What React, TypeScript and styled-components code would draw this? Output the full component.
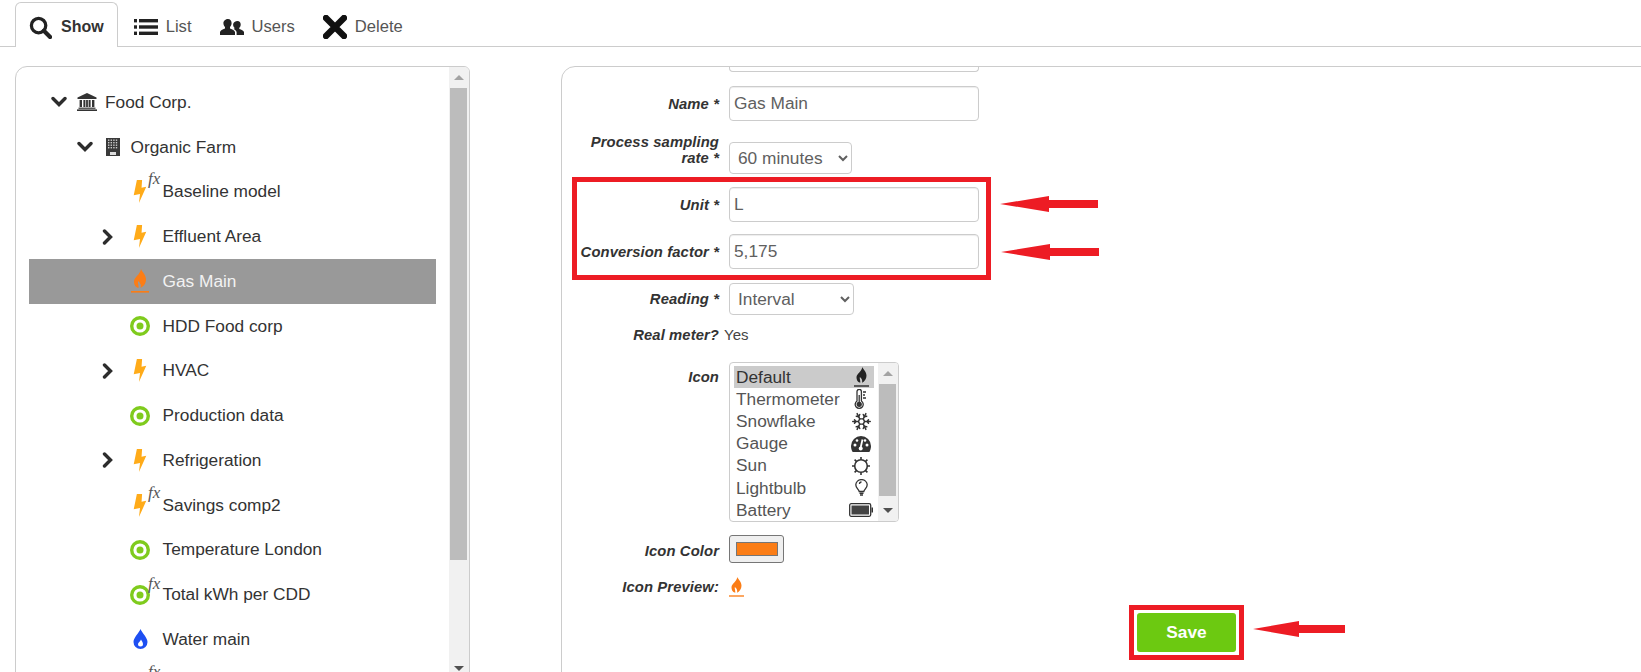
import React from "react";
import styled, { createGlobalStyle } from "styled-components";
import { Snowflake } from "lucide-react";

const GlobalStyle = createGlobalStyle`
  html, body {
    margin: 0;
    height: 672px;
    overflow: hidden;
    background: #fff;
    font-family: "Liberation Sans", Arial, sans-serif;
    color: #333;
  }
`;

const Page = styled.div`
  width: 1641px;
  height: 672px;
  overflow: hidden;
`;

const TabBar = styled.div`
  display: flex;
  height: 44px;
  padding: 2px 0 0 15px;
  border-bottom: 1px solid #ccc;
`;

const Tab = styled.div<{ $active?: boolean }>`
  display: flex;
  align-items: center;
  gap: ${({ $active }) => ($active ? "9px" : "8px")};
  height: ${({ $active }) => ($active ? "45px" : "44px")};
  box-sizing: border-box;
  padding: ${({ $active }) => ($active ? "4px 13px 0 13px" : "4px 11px 0 14px")};
  margin-left: ${({ $active }) => ($active ? "0" : "1px")};
  font-size: ${({ $active }) => ($active ? "16px" : "16.6px")};
  font-weight: ${({ $active }) => ($active ? 700 : 400)};
  color: ${({ $active }) => ($active ? "#333" : "#555")};
  background: #fff;
  border: 1px solid ${({ $active }) => ($active ? "#ccc" : "transparent")};
  border-bottom: none;
  border-radius: 6px 6px 0 0;
`;

const Content = styled.div`
  display: flex;
  gap: 91px;
  padding: 19px 0 0 15px;
`;

const TreePanel = styled.div`
  flex: 0 0 455px;
  height: 614px;
  box-sizing: border-box;
  display: flex;
  border: 1px solid #ccc;
  border-radius: 12px 6px 0 0;
  overflow: hidden;
`;

const Tree = styled.div`
  flex: 1;
  padding: 13px 13px 0;
`;

const TreeRow = styled.div<{ $level: number; $selected?: boolean }>`
  display: flex;
  align-items: center;
  height: 44.75px;
  padding-left: ${({ $level }) => 22 + $level * 25.5}px;
  font-size: 17.3px;
  background: ${({ $selected }) => ($selected ? "#999" : "transparent")};
  color: ${({ $selected }) => ($selected ? "#f2f2f2" : "#333")};
`;

const CaretSlot = styled.div`
  flex: 0 0 26px;
  display: flex;
  align-items: center;
`;

const IconSlot = styled.div<{ $leaf?: boolean }>`
  position: relative;
  flex: 0 0 ${({ $leaf }) => ($leaf ? "24px" : "20px")};
  margin-right: ${({ $leaf }) => ($leaf ? "10.5px" : "8px")};
  display: flex;
  align-items: center;
  justify-content: center;
`;

const Fx = styled.span`
  position: absolute;
  left: 20px;
  top: -9px;
  font-family: "Liberation Serif", serif;
  font-style: italic;
  font-size: 17px;
  line-height: 16px;
  color: #555;
`;

const Track = styled.div`
  flex: 0 0 20px;
  display: flex;
  flex-direction: column;
  justify-content: space-between;
  background: #f1f1f1;
`;

const ScrollTop = styled.div``;

const ScrollButton = styled.div`
  height: 21px;
  display: flex;
  align-items: center;
  justify-content: center;
`;

const Triangle = styled.span<{ $down?: boolean }>`
  width: 0;
  height: 0;
  border-left: 5px solid transparent;
  border-right: 5px solid transparent;
  border-bottom: ${({ $down }) => ($down ? "none" : "5px solid #a3a3a3")};
  border-top: ${({ $down }) => ($down ? "5px solid #505050" : "none")};
`;

const Thumb = styled.div<{ $height: number }>`
  height: ${({ $height }) => $height}px;
  margin: 0 2px 0 1px;
  background: #bcbcbc;
`;

const FormPanel = styled.div`
  flex: 0 0 1100px;
  height: 614px;
  box-sizing: border-box;
  border: 1px solid #ccc;
  border-radius: 14px 0 0 0;
  overflow: hidden;
`;

const ClippedField = styled.div`
  width: 250px;
  height: 5px;
  box-sizing: border-box;
  margin-left: 167px;
  border: 1px solid #ccc;
  border-top: none;
  border-radius: 0 0 4px 4px;
`;

const Row = styled.div<{ $top: number; $align?: string }>`
  display: flex;
  align-items: ${({ $align }) => $align ?? "center"};
  gap: 10px;
  margin-top: ${({ $top }) => $top}px;
  padding-left: 10px;
`;

const Label = styled.div<{ $pad?: number; $lift?: number }>`
  flex: 0 0 147px;
  box-sizing: border-box;
  padding-top: ${({ $pad }) => $pad ?? 0}px;
  margin-bottom: ${({ $lift }) => $lift ?? 0}px;
  text-align: right;
  font-size: 14.8px;
  line-height: 16px;
  font-weight: 700;
  font-style: italic;
  letter-spacing: 0.1px;
  color: #333;
`;

const TextInput = styled.input`
  width: 250px;
  height: 35px;
  box-sizing: border-box;
  padding: 0 4px;
  border: 1px solid #ccc;
  border-radius: 4px;
  font: 17.3px "Liberation Sans", Arial, sans-serif;
  color: #606060;
  background: #fff;
  box-shadow: inset 0 1px 1px rgba(0, 0, 0, 0.075);
`;

const Select = styled.select<{ $width: number }>`
  width: ${({ $width }) => $width}px;
  height: 32px;
  box-sizing: border-box;
  padding: 0 4px;
  border: 1px solid #ccc;
  border-radius: 4px;
  font: 17.3px "Liberation Sans", Arial, sans-serif;
  color: #606060;
  background: #fff;
`;

const Highlight = styled.div`
  position: relative;
  width: 419px;
  box-sizing: border-box;
  margin: 3px 0 3px 10px;
  padding: 5px 0 6px;
  border: 5px solid #ed1c24;

  ${Row} {
    margin-left: -15px;
    padding-left: 10px;
  }
`;

const ArrowMark = styled.svg<{ $top: number; $left: number }>`
  position: absolute;
  top: ${({ $top }) => $top}px;
  left: ${({ $left }) => $left}px;
`;

const Value = styled.span`
  margin-left: -5px;
  font-size: 15px;
  color: #444;
`;

const IconList = styled.div`
  width: 170px;
  height: 160px;
  box-sizing: border-box;
  display: flex;
  border: 1px solid #ccc;
  border-radius: 4px;
  overflow: hidden;
`;

const Options = styled.div`
  flex: 1;
  padding: 3px 4px 0;
  overflow: hidden;
`;

const Option = styled.div<{ $selected?: boolean }>`
  display: flex;
  align-items: center;
  justify-content: space-between;
  height: 22.2px;
  padding-left: 2px;
  font-size: 17.3px;
  color: ${({ $selected }) => ($selected ? "#333" : "#555")};
  background: ${({ $selected }) => ($selected ? "#cbcbcb" : "transparent")};
`;

const OptionIcon = styled.span`
  flex: 0 0 26px;
  display: flex;
  justify-content: center;
  color: #333;
`;

const ColorButton = styled.div`
  width: 55px;
  height: 28px;
  box-sizing: border-box;
  display: flex;
  align-items: center;
  justify-content: center;
  background: #efefef;
  border: 1px solid #767676;
  border-radius: 3px;
`;

const Swatch = styled.div`
  width: 42px;
  height: 14px;
  box-sizing: border-box;
  background: #fb7d16;
  border: 1px solid #767676;
`;

const SaveRow = styled.div`
  margin: 8px 0 0 567px;
`;

const SaveFrame = styled.div`
  position: relative;
  width: 115px;
  height: 55px;
  box-sizing: border-box;
  padding: 3px;
  border: 5px solid #ed1c24;
`;

const SaveButton = styled.button`
  display: block;
  width: 100%;
  height: 100%;
  border: none;
  border-radius: 3px;
  background: #6cc911;
  color: #fff;
  font: 700 17.3px "Liberation Sans", Arial, sans-serif;
`;

const SearchIcon = () => (
  <svg width="23" height="23" viewBox="0 0 24 24">
    <circle cx="10" cy="10" r="7.5" fill="none" stroke="#222" strokeWidth="3.4" />
    <path d="M15.5 15.5L22 22" stroke="#222" strokeWidth="4.4" strokeLinecap="round" />
  </svg>
);

const ListIcon = () => (
  <svg width="24" height="16" viewBox="0 0 24 16" fill="#222">
    <rect x="0" y="0" width="3" height="3.4" />
    <rect x="5" y="0" width="19" height="3.4" />
    <rect x="0" y="6.3" width="3" height="3.4" />
    <rect x="5" y="6.3" width="19" height="3.4" />
    <rect x="0" y="12.6" width="3" height="3.4" />
    <rect x="5" y="12.6" width="19" height="3.4" />
  </svg>
);

const UsersIcon = () => (
  <svg width="24" height="16" viewBox="0 0 24 16" fill="#222">
    <path d="M8 0c2.3 0 3.6 1.8 3.6 4 0 1.7-.7 3.2-1.6 4v1.4c2.6.8 4.6 2 5 3.6V16H0v-3c.4-1.6 2.4-2.8 5-3.6V8c-.9-.8-1.6-2.3-1.6-4C3.4 1.8 5.7 0 8 0z" />
    <path d="M17.5 2c2 0 3.2 1.5 3.2 3.4 0 1.5-.6 2.7-1.4 3.4v1.1c2.2.7 4.1 1.7 4.7 3.1V16h-7.4v-3c-.5-1.3-1.700-2.300-3-3l.9-.6V8.800c-.8-.7-1.400-1.900-1.400-3.400C13.100 3.500 15.500 2 17.500 2z" />
  </svg>
);

const CloseMark = () => (
  <svg width="24" height="24" viewBox="0 0 24 24">
    <path d="M3 3L21 21M21 3L3 21" stroke="#111" strokeWidth="6.4" strokeLinecap="round" />
  </svg>
);

const Caret = ({ open, size }: { open: boolean; size: number }) => (
  <svg width={open ? size : 12} height={open ? 12 : size} viewBox={open ? "0 0 16 12" : "0 0 12 16"}>
    <path
      d={open ? "M2 2.5L8 8.5L14 2.5" : "M2.5 2L8.5 8L2.5 14"}
      fill="none"
      stroke="#2d2d2d"
      strokeWidth="3.4"
      strokeLinecap="round"
    />
  </svg>
);

const BankIcon = () => (
  <svg width="20" height="18" viewBox="0 0 20 18" fill="#333">
    <path d="M10 0L19.5 4.500V6H.5V4.500z" />
    <rect x="2.600" y="7" width="2.400" height="7" />
    <rect x="6.400" y="7" width="2" height="7" />
    <rect x="11.600" y="7" width="2" height="7" />
    <rect x="9.100" y="7" width="1.800" height="7" />
    <rect x="15" y="7" width="2.400" height="7" />
    <rect x="1.500" y="14.600" width="17" height="1.200" />
    <rect x="0" y="16.400" width="20" height="1.600" />
  </svg>
);

const BuildingIcon = () => (
  <svg width="14" height="18" viewBox="0 0 14 18">
    <rect width="14" height="18" fill="#3a3a3a" />
    {[1.5, 4, 6.5, 9].map((y) =>
      [2, 4.6, 7.2, 9.8].map((x) => <rect key={`${x}-${y}`} x={x} y={y} width="1.4" height="1.4" fill="#ccc" />)
    )}
    <rect x="4" y="14" width="6" height="3" fill="#ddd" />
  </svg>
);

const BoltIcon = () => (
  <svg width="14" height="23" viewBox="0 0 12 22">
    <polygon points="3,0 8,0 7.500,7.500 12,6.500 5,22 6,13.500 0,14.500" fill="#ffab19" />
  </svg>
);

const FlameIcon = ({ color, width = 18, height = 24 }: { color: string; width?: number; height?: number }) => (
  <svg width={width} height={height} viewBox="0 0 18 24" fill={color}>
    <path d="M10 0c1 3 5 5.500 5 10.500 0 4-2.500 7-5.500 8.500 1-2.500 0-5-2.500-7-.5 2 1 5 .5 7C4 18 3 15 3 12.500 3 8 9 6 10 0z" />
    <rect x="0" y="22" width="18" height="1.600" />
  </svg>
);

const TargetIcon = () => (
  <svg width="20" height="20" viewBox="0 0 20 20">
    <circle cx="10" cy="10" r="8.300" fill="none" stroke="#7fcb1d" strokeWidth="3.400" />
    <circle cx="10" cy="10" r="3.500" fill="#7fcb1d" />
  </svg>
);

const DropIcon = () => (
  <svg width="15" height="20" viewBox="0 0 15 20">
    <path d="M7.500 0C9 4 14.500 8.500 14.500 13a7 7 0 0 1-14 0C.5 8.500 6 4 7.500 0z" fill="#1e4ff2" />
    <path d="M8 10.500c.5 1.500 2 2.500 2 4.500a2.500 2.500 0 0 1-5 0c0-1.500 2.500-2.500 3-4.500z" fill="#fff" />
  </svg>
);

const ThermometerIcon = () => (
  <svg width="14" height="20" viewBox="0 0 14 20" fill="none" stroke="#333" strokeWidth="1.300">
    <path d="M3 2.500a2.200 2.200 0 0 1 4.400 0v9.500a4 4 0 1 1-4.400 0z" />
    <circle cx="5.200" cy="15.300" r="2" fill="#333" />
    <path d="M5.200 6v8M9 3h3M9 6h2M9 9h3" />
  </svg>
);

const GaugeIcon = () => (
  <svg width="20" height="16" viewBox="0 0 20 16">
    <path d="M10 0a10 10 0 0 1 10 10c0 2.200-.7 4.300-1.600 6H1.600C.7 14.300 0 12.200 0 10A10 10 0 0 1 10 0z" fill="#333" />
    <circle cx="4" cy="9" r="1.500" fill="#fff" />
    <circle cx="6" cy="4.500" r="1.300" fill="#fff" />
    <circle cx="16" cy="9" r="1.500" fill="#fff" />
    <circle cx="14" cy="4.500" r="1.300" fill="#fff" />
    <path d="M11.500 3.500L9.800 11" stroke="#fff" strokeWidth="1.800" />
    <circle cx="9.700" cy="12.500" r="2" fill="#fff" />
  </svg>
);

const SunIcon = () => (
  <svg width="18" height="18" viewBox="0 0 18 18" fill="none" stroke="#333">
    <circle cx="9" cy="9" r="6.300" strokeWidth="1.600" />
    <path
      d="M9 0v2.500M9 15.500V18M0 9h2.500M15.500 9H18M2.600 2.600l1.800 1.800M13.600 13.600l1.800 1.800M2.600 15.400l1.800-1.800M13.600 4.400l1.800-1.800"
      strokeWidth="1.600"
    />
  </svg>
);

const BulbIcon = () => (
  <svg width="13" height="18" viewBox="0 0 13 18" fill="none" stroke="#333" strokeWidth="1.300">
    <path d="M4.200 12.500C3.500 10 .8 9 .8 5.800a5.700 5.200 0 0 1 11.400 0c0 3.200-2.700 4.200-3.400 6.700z" />
    <path d="M4.500 14.200h4M5 16h3" strokeWidth="1.600" />
    <path d="M4.500 5a2 2 0 0 1 2-2" />
  </svg>
);

const BatteryIcon = () => (
  <svg width="24" height="14" viewBox="0 0 24 14">
    <rect x=".7" y=".7" width="21" height="12.600" rx="1.500" fill="none" stroke="#333" strokeWidth="1.300" />
    <rect x="2.500" y="2.500" width="17.500" height="9" fill="#444" />
    <rect x="22.500" y="4.500" width="1.500" height="5" fill="#333" />
  </svg>
);

const RedArrow = ({ top, left, width }: { top: number; left: number; width: number }) => (
  <ArrowMark $top={top} $left={left} width={width} height="16" viewBox={`0 0 ${width} 16`}>
    <path d={`M0 8L${width / 2} 0V4H${width}V12H${width / 2}V16Z`} fill="#ed1c24" />
  </ArrowMark>
);

type Node = { label: string; level: number; icon: React.ReactNode; caret?: "open" | "closed"; fx?: boolean; selected?: boolean };

const nodes: Node[] = [
  { label: "Food Corp.", level: 0, icon: <BankIcon />, caret: "open" },
  { label: "Organic Farm", level: 1, icon: <BuildingIcon />, caret: "open" },
  { label: "Baseline model", level: 2, icon: <BoltIcon />, fx: true },
  { label: "Effluent Area", level: 2, icon: <BoltIcon />, caret: "closed" },
  { label: "Gas Main", level: 2, icon: <FlameIcon color="#fb7d16" />, selected: true },
  { label: "HDD Food corp", level: 2, icon: <TargetIcon /> },
  { label: "HVAC", level: 2, icon: <BoltIcon />, caret: "closed" },
  { label: "Production data", level: 2, icon: <TargetIcon /> },
  { label: "Refrigeration", level: 2, icon: <BoltIcon />, caret: "closed" },
  { label: "Savings comp2", level: 2, icon: <BoltIcon />, fx: true },
  { label: "Temperature London", level: 2, icon: <TargetIcon /> },
  { label: "Total kWh per CDD", level: 2, icon: <TargetIcon />, fx: true },
  { label: "Water main", level: 2, icon: <DropIcon /> },
  { label: "", level: 2, icon: <BoltIcon />, fx: true },
];

const iconOptions: { label: string; icon: React.ReactNode }[] = [
  { label: "Default", icon: <FlameIcon color="#222" width={15} height={20} /> },
  { label: "Thermometer", icon: <ThermometerIcon /> },
  { label: "Snowflake", icon: <Snowflake size={21} strokeWidth={1.7} color="#333" /> },
  { label: "Gauge", icon: <GaugeIcon /> },
  { label: "Sun", icon: <SunIcon /> },
  { label: "Lightbulb", icon: <BulbIcon /> },
  { label: "Battery", icon: <BatteryIcon /> },
];

const Scrollbar = ({ thumb }: { thumb: number }) => (
  <Track>
    <ScrollTop>
      <ScrollButton>
        <Triangle />
      </ScrollButton>
      <Thumb $height={thumb} />
    </ScrollTop>
    <ScrollButton>
      <Triangle $down />
    </ScrollButton>
  </Track>
);

export default function App() {
  return (
    <Page>
      <GlobalStyle />
      <TabBar>
        <Tab $active>
          <SearchIcon />
          Show
        </Tab>
        <Tab>
          <ListIcon />
          List
        </Tab>
        <Tab>
          <UsersIcon />
          Users
        </Tab>
        <Tab>
          <CloseMark />
          Delete
        </Tab>
      </TabBar>
      <Content>
        <TreePanel>
          <Tree>
            {nodes.map((n, i) => (
              <TreeRow key={i} $level={n.level} $selected={n.selected}>
                <CaretSlot>{n.caret && <Caret open={n.caret === "open"} size={16} />}</CaretSlot>
                <IconSlot $leaf={n.level === 2}>
                  {n.icon}
                  {n.fx && <Fx>fx</Fx>}
                </IconSlot>
                {n.label}
              </TreeRow>
            ))}
          </Tree>
          <Scrollbar thumb={472} />
        </TreePanel>
        <FormPanel>
          <ClippedField />
          <Row $top={14}>
            <Label>Name *</Label>
            <TextInput defaultValue="Gas Main" />
          </Row>
          <Row $top={13} $align="flex-end">
            <Label $lift={8}>Process sampling rate *</Label>
            <Select $width={123} defaultValue="60 minutes">
              <option>60 minutes</option>
              <option>30 minutes</option>
            </Select>
          </Row>
          <Highlight>
            <Row $top={0}>
              <Label>Unit *</Label>
              <TextInput defaultValue="L" />
            </Row>
            <Row $top={12}>
              <Label>Conversion factor *</Label>
              <TextInput defaultValue="5,175" />
            </Row>
            <RedArrow top={14} left={423} width={98} />
            <RedArrow top={62} left={424} width={98} />
          </Highlight>
          <Row $top={0}>
            <Label>Reading *</Label>
            <Select $width={125} defaultValue="Interval">
              <option>Interval</option>
              <option>Cumulative</option>
            </Select>
          </Row>
          <Row $top={11}>
            <Label>Real meter?</Label>
            <Value>Yes</Value>
          </Row>
          <Row $top={19} $align="flex-start">
            <Label $pad={7}>Icon</Label>
            <IconList>
              <Options>
                {iconOptions.map((o, i) => (
                  <Option key={o.label} $selected={i === 0}>
                    {o.label}
                    <OptionIcon>{o.icon}</OptionIcon>
                  </Option>
                ))}
              </Options>
              <Scrollbar thumb={112} />
            </IconList>
          </Row>
          <Row $top={13}>
            <Label $pad={4}>Icon Color</Label>
            <ColorButton>
              <Swatch />
            </ColorButton>
          </Row>
          <Row $top={14}>
            <Label>Icon Preview:</Label>
            <FlameIcon color="#fb7d16" width={15} height={20} />
          </Row>
          <SaveRow>
            <SaveFrame>
              <SaveButton>Save</SaveButton>
              <RedArrow top={11} left={119} width={92} />
            </SaveFrame>
          </SaveRow>
        </FormPanel>
      </Content>
    </Page>
  );
}
